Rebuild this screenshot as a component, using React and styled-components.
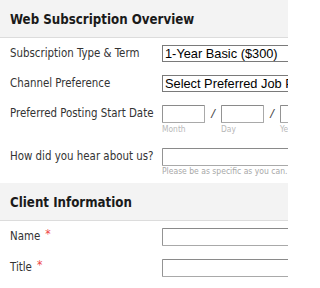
import React from "react";
import styled, { createGlobalStyle } from "styled-components";

const Global = createGlobalStyle`
  html, body { margin: 0; padding: 0; background: #fff; overflow: hidden; }
  body { font-family: "DejaVu Sans Condensed", "DejaVu Sans", Verdana, sans-serif; }
`;

const Page = styled.div`
  width: 288px;
  height: 288px;
  overflow: hidden;
  display: flex;
  flex-direction: column;
`;

const SectionHeader = styled.h2`
  margin: 0;
  height: 38px;
  box-sizing: border-box;
  padding: 2px 0 0 10px;
  display: flex;
  align-items: center;
  background: #f3f3f3;
  border-bottom: 1px solid #dcdcdc;
  font-size: 13.2px;
  font-weight: bold;
  color: #1a1a1a;
  white-space: nowrap;
`;

const Row = styled.div`
  display: flex;
  align-items: flex-start;
  padding: 7px 0 ${(p) => p.$bottom ?? 6}px;
  white-space: nowrap;
  overflow: hidden;
`;

const Label = styled.label`
  flex: 0 0 162px;
  width: 162px;
  min-width: 0;
  box-sizing: border-box;
  padding-left: 10px;
  line-height: 17px;
  font-size: 11.4px;
  color: #333;
`;

const Req = styled.span`
  color: #ee4444;
  font-size: 12px;
  margin-left: 5px;
  position: relative;
  top: -2px;
`;

const Field = styled.div`
  display: flex;
  flex-direction: column;
  flex: 0 0 auto;
`;

const Select = styled.select`
  box-sizing: border-box;
  width: 220px;
  height: 17px;
  margin: 0;
  padding: 0 2px;
  border: 1px solid #7a7a7a;
  border-radius: 0;
  background: #fff;
  font-family: "Liberation Sans", Arial, sans-serif;
  font-size: 12.8px;
  color: #000;
  appearance: none;
  line-height: 15px;
`;

const TextInput = styled.input`
  box-sizing: border-box;
  width: ${(p) => p.$w || 220}px;
  height: 18px;
  margin: 0;
  border: 1px solid #a9a9a9;
  border-top-color: #8a8a8a;
  border-left-color: #949494;
  border-radius: 1px;
  background: #fff;
`;

const DateGroup = styled.div`
  display: flex;
  align-items: flex-start;
  flex: 0 0 auto;
`;

const DatePart = styled.div`
  display: flex;
  flex-direction: column;
`;

const Slash = styled.span`
  width: 16px;
  text-align: center;
  line-height: 18px;
  font-size: 13px;
  color: #444;
  font-family: "Liberation Sans", Arial, sans-serif;
  font-style: italic;
`;

const SubLabel = styled.span`
  font-size: 8.4px;
  line-height: 12px;
  color: #b8b8b8;
`;

const Help = styled.span`
  font-size: 8.5px;
  line-height: 11px;
  color: #a8a8a8;
`;

export default function App() {
  return (
    <Page>
      <Global />
      <SectionHeader>Web Subscription Overview</SectionHeader>
      <Row>
        <Label>Subscription Type &amp; Term</Label>
        <Field>
          <Select defaultValue="basic">
            <option value="basic">1-Year Basic ($300)</option>
          </Select>
        </Field>
      </Row>
      <Row>
        <Label>Channel Preference</Label>
        <Field>
          <Select defaultValue="">
            <option value="">Select Preferred Job Posting Channel</option>
          </Select>
        </Field>
      </Row>
      <Row $bottom={6}>
        <Label>Preferred Posting Start Date</Label>
        <DateGroup>
          <DatePart>
            <TextInput $w={43} />
            <SubLabel>Month</SubLabel>
          </DatePart>
          <Slash>/</Slash>
          <DatePart>
            <TextInput $w={43} />
            <SubLabel>Day</SubLabel>
          </DatePart>
          <Slash>/</Slash>
          <DatePart>
            <TextInput $w={50} />
            <SubLabel>Year</SubLabel>
          </DatePart>
        </DateGroup>
      </Row>
      <Row $bottom={6}>
        <Label>How did you hear about us?</Label>
        <Field>
          <TextInput />
          <Help>Please be as specific as you can.</Help>
        </Field>
      </Row>
      <SectionHeader>Client Information</SectionHeader>
      <Row>
        <Label>
          Name<Req>*</Req>
        </Label>
        <Field>
          <TextInput />
        </Field>
      </Row>
      <Row>
        <Label>
          Title<Req>*</Req>
        </Label>
        <Field>
          <TextInput />
        </Field>
      </Row>
    </Page>
  );
}
